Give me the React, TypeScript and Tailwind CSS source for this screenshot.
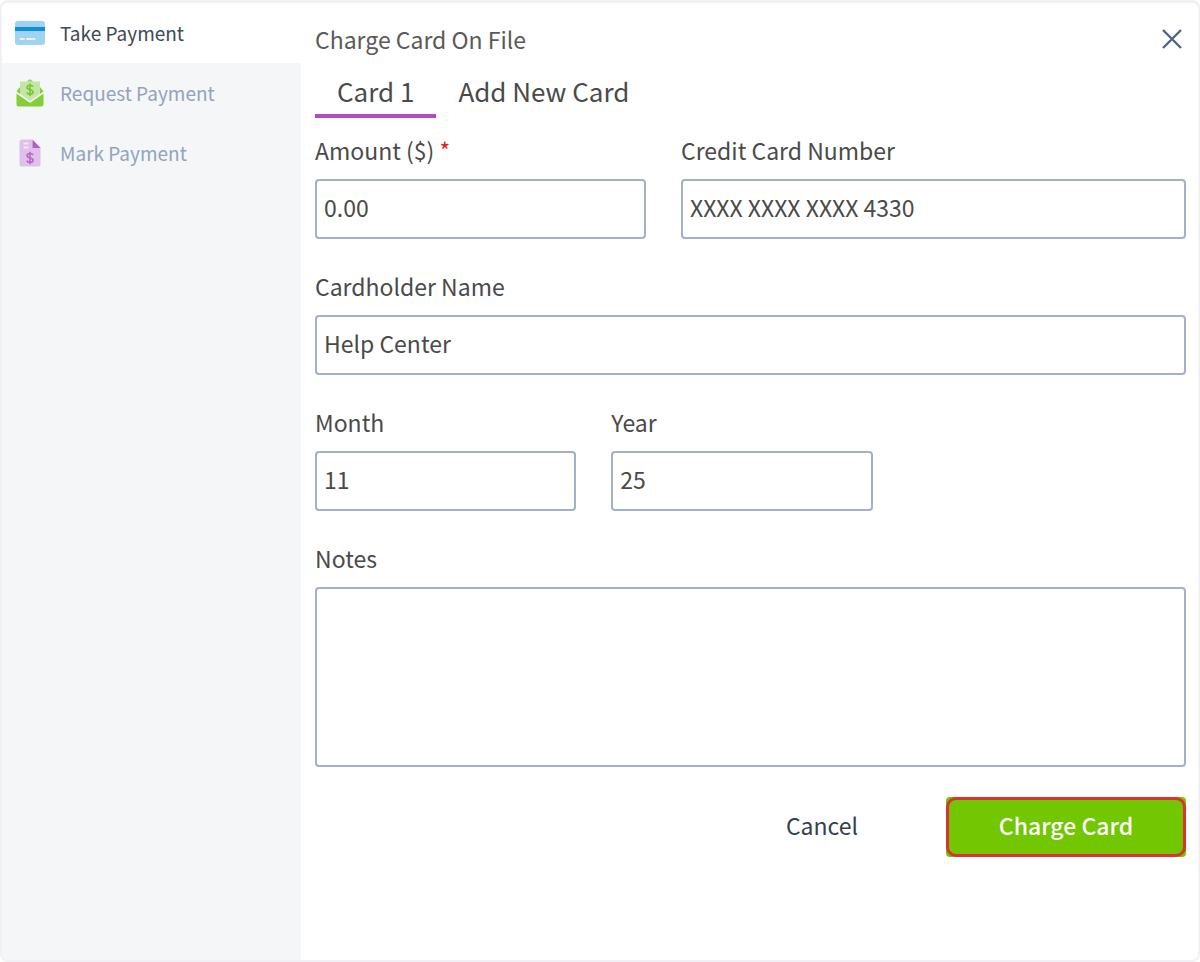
import { useState } from "react";
import type { InputHTMLAttributes, ReactNode } from "react";

function CardIcon() {
  return (
    <svg width="30" height="24" viewBox="0 0 30 24" aria-hidden="true">
      <rect width="30" height="24" rx="3" fill="#9fd3f0" />
      <rect y="6" width="30" height="4" fill="#0f8fd8" />
      <path d="M5.5 18H9M12 18h7.500" stroke="#e9f6fd" strokeWidth="2" strokeLinecap="round" />
    </svg>
  );
}

function EnvelopeIcon() {
  return (
    <svg width="28" height="28" viewBox="0 0 28 28" aria-hidden="true">
      <path d="M.5 12.500 4 8v7zM27.500 12.500 24 8v7z" fill="#84cf33" />
      <path
        d="M4 2.500h7q.500-2 3-2t3 2h7V14.500l-10 7.500-10-7.500z"
        fill="#c3e6a5"
      />
      <path d="M11.500 2.500q.500-2 2.500-2t2.500 2z" fill="#9ad95c" />
      <path
        d="M17 7.800c-.5-1.200-1.700-1.500-3-1.500-1.600 0-2.900.8-2.900 2.200 0 3 6 1.500 6 4.500 0 1.400-1.400 2.200-3.100 2.200-1.500 0-2.700-.5-3.200-1.800M14 4.500v12.500"
        fill="none"
        stroke="#76c62c"
        strokeWidth="1.600"
      />
      <path
        d="M.5 14.500 12.600 23q1.400 1 2.800 0L27.500 14.500V25q0 2.500-2.500 2.500H3Q.5 27.500.5 25z"
        fill="#84cf33"
      />
    </svg>
  );
}

function InvoiceIcon() {
  return (
    <svg width="22" height="28" viewBox="0 0 22 28" aria-hidden="true">
      <path d="M3.500.5H13.500V8H21.500V25q0 2.500-2.500 2.500H3Q.5 27.500.5 25V3.500q0-3 3-3z" fill="#dfc0e8" />
      <path d="M13.500.5 21.500 9h-8z" fill="#b45cc5" />
      <path d="M4.500 4.500h5M4.500 8.500h5" stroke="#f3e6f6" strokeWidth="2" />
      <path
        d="M14 16c-.5-1.200-1.700-1.500-3-1.500-1.600 0-2.900.8-2.900 2.200 0 3 6 1.500 6 4.500 0 1.400-1.400 2.200-3.100 2.200-1.500 0-2.700-.5-3.200-1.800M11 12.700v12.500"
        fill="none"
        stroke="#b866c8"
        strokeWidth="1.600"
      />
    </svg>
  );
}

const NAV_ITEMS = [
  { id: "take", label: "Take Payment", icon: <CardIcon /> },
  { id: "request", label: "Request Payment", icon: <EnvelopeIcon /> },
  { id: "mark", label: "Mark Payment", icon: <InvoiceIcon /> },
];

interface FieldProps extends InputHTMLAttributes<HTMLInputElement> {
  id: string;
  label: ReactNode;
}

function Field({ id, label, ...props }: FieldProps) {
  return (
    <div>
      <label htmlFor={id} className="block leading-[30px]">
        {label}
      </label>
      <input
        id={id}
        type="text"
        className="mt-3.5 block h-[60px] w-full rounded border-2 border-[#a3b0c5] bg-white px-[7px] pb-1 outline-none focus:border-[#5a708f]"
        {...props}
      />
    </div>
  );
}

export default function App() {
  const [section, setSection] = useState("take");
  const [tab, setTab] = useState("card");

  return (
    <div className="flex min-h-screen overflow-hidden rounded-lg border-2 border-t-[3px] border-[#f1f0f5] bg-white font-['Noto_Sans_CJK_SC',sans-serif] text-[#4a4a4a]">
      <nav className="w-1/4 shrink-0 bg-[#f4f6f8]">
        {NAV_ITEMS.map((item) => (
          <button
            key={item.id}
            type="button"
            onClick={() => setSection(item.id)}
            className={`flex h-[60px] w-full items-center gap-3.5 px-3 text-left text-[19px] ${
              section === item.id ? "bg-white text-[#3d4a57]" : "text-[#93a3bc]"
            }`}
          >
            <span className="flex w-8 shrink-0 justify-center">{item.icon}</span>
            {item.label}
          </button>
        ))}
      </nav>

      <main className="flex-1 pt-[18px] pr-3 pl-3.5 text-[23px]">
        <header className="flex h-9 items-center justify-between">
          <h1 className="leading-9 text-[#5a5a5a]">Charge Card On File</h1>
          <button type="button" aria-label="Close" className="px-1 text-[#4d6585]">
            <svg width="20" height="20" viewBox="0 0 20 20" aria-hidden="true">
              <path d="M1 1 19 19M19 1 1 19" stroke="currentColor" strokeWidth="2.400" />
            </svg>
          </button>
        </header>

        <div className="mt-[11px] flex text-[26px] leading-[46px]">
          <button
            type="button"
            onClick={() => setTab("card")}
            className={`border-b-4 px-[22px] ${tab === "card" ? "border-[#b04cc4]" : "border-transparent"}`}
          >
            Card 1
          </button>
          <button
            type="button"
            onClick={() => setTab("new")}
            className={`border-b-4 px-[22px] ${tab === "new" ? "border-[#b04cc4]" : "border-transparent"}`}
          >
            Add New Card
          </button>
        </div>

        <form className="mt-[17px]" onSubmit={(e) => e.preventDefault()}>
          <div className="flex flex-col gap-8">
            <div className="grid grid-cols-[38%_1fr] gap-[35px]">
              <Field
                id="amount"
                label={
                  <>
                    Amount ($) <span className="text-[#f01818]">*</span>
                  </>
                }
                defaultValue="0.00"
                required
              />
              <Field id="card-number" label="Credit Card Number" defaultValue="XXXX XXXX XXXX 4330" />
            </div>
            <Field id="holder" label="Cardholder Name" defaultValue="Help Center" />
            <div className="grid grid-cols-[30%_30%] gap-[35px]">
              <Field id="month" label="Month" defaultValue="11" />
              <Field id="year" label="Year" defaultValue="25" />
            </div>
            <div>
              <label htmlFor="notes" className="block leading-[30px]">
                Notes
              </label>
              <textarea
                id="notes"
                className="mt-3.5 block h-[180px] w-full resize-none rounded border-2 border-[#a3b0c5] bg-white p-[7px] outline-none focus:border-[#5a708f]"
              />
            </div>
          </div>

          <div className="mt-[30px] flex justify-end gap-1">
            <button type="button" className="h-[60px] w-[240px] pb-1 text-[#33414f]">
              Cancel
            </button>
            <button
              type="submit"
              className="relative h-[60px] w-[240px] rounded bg-[#72c602] pb-1 font-medium text-white"
            >
              <span className="absolute inset-0 rounded-[10px] border-[3px] border-[#dc3232]" />
              Charge Card
            </button>
          </div>
        </form>
      </main>
    </div>
  );
}
